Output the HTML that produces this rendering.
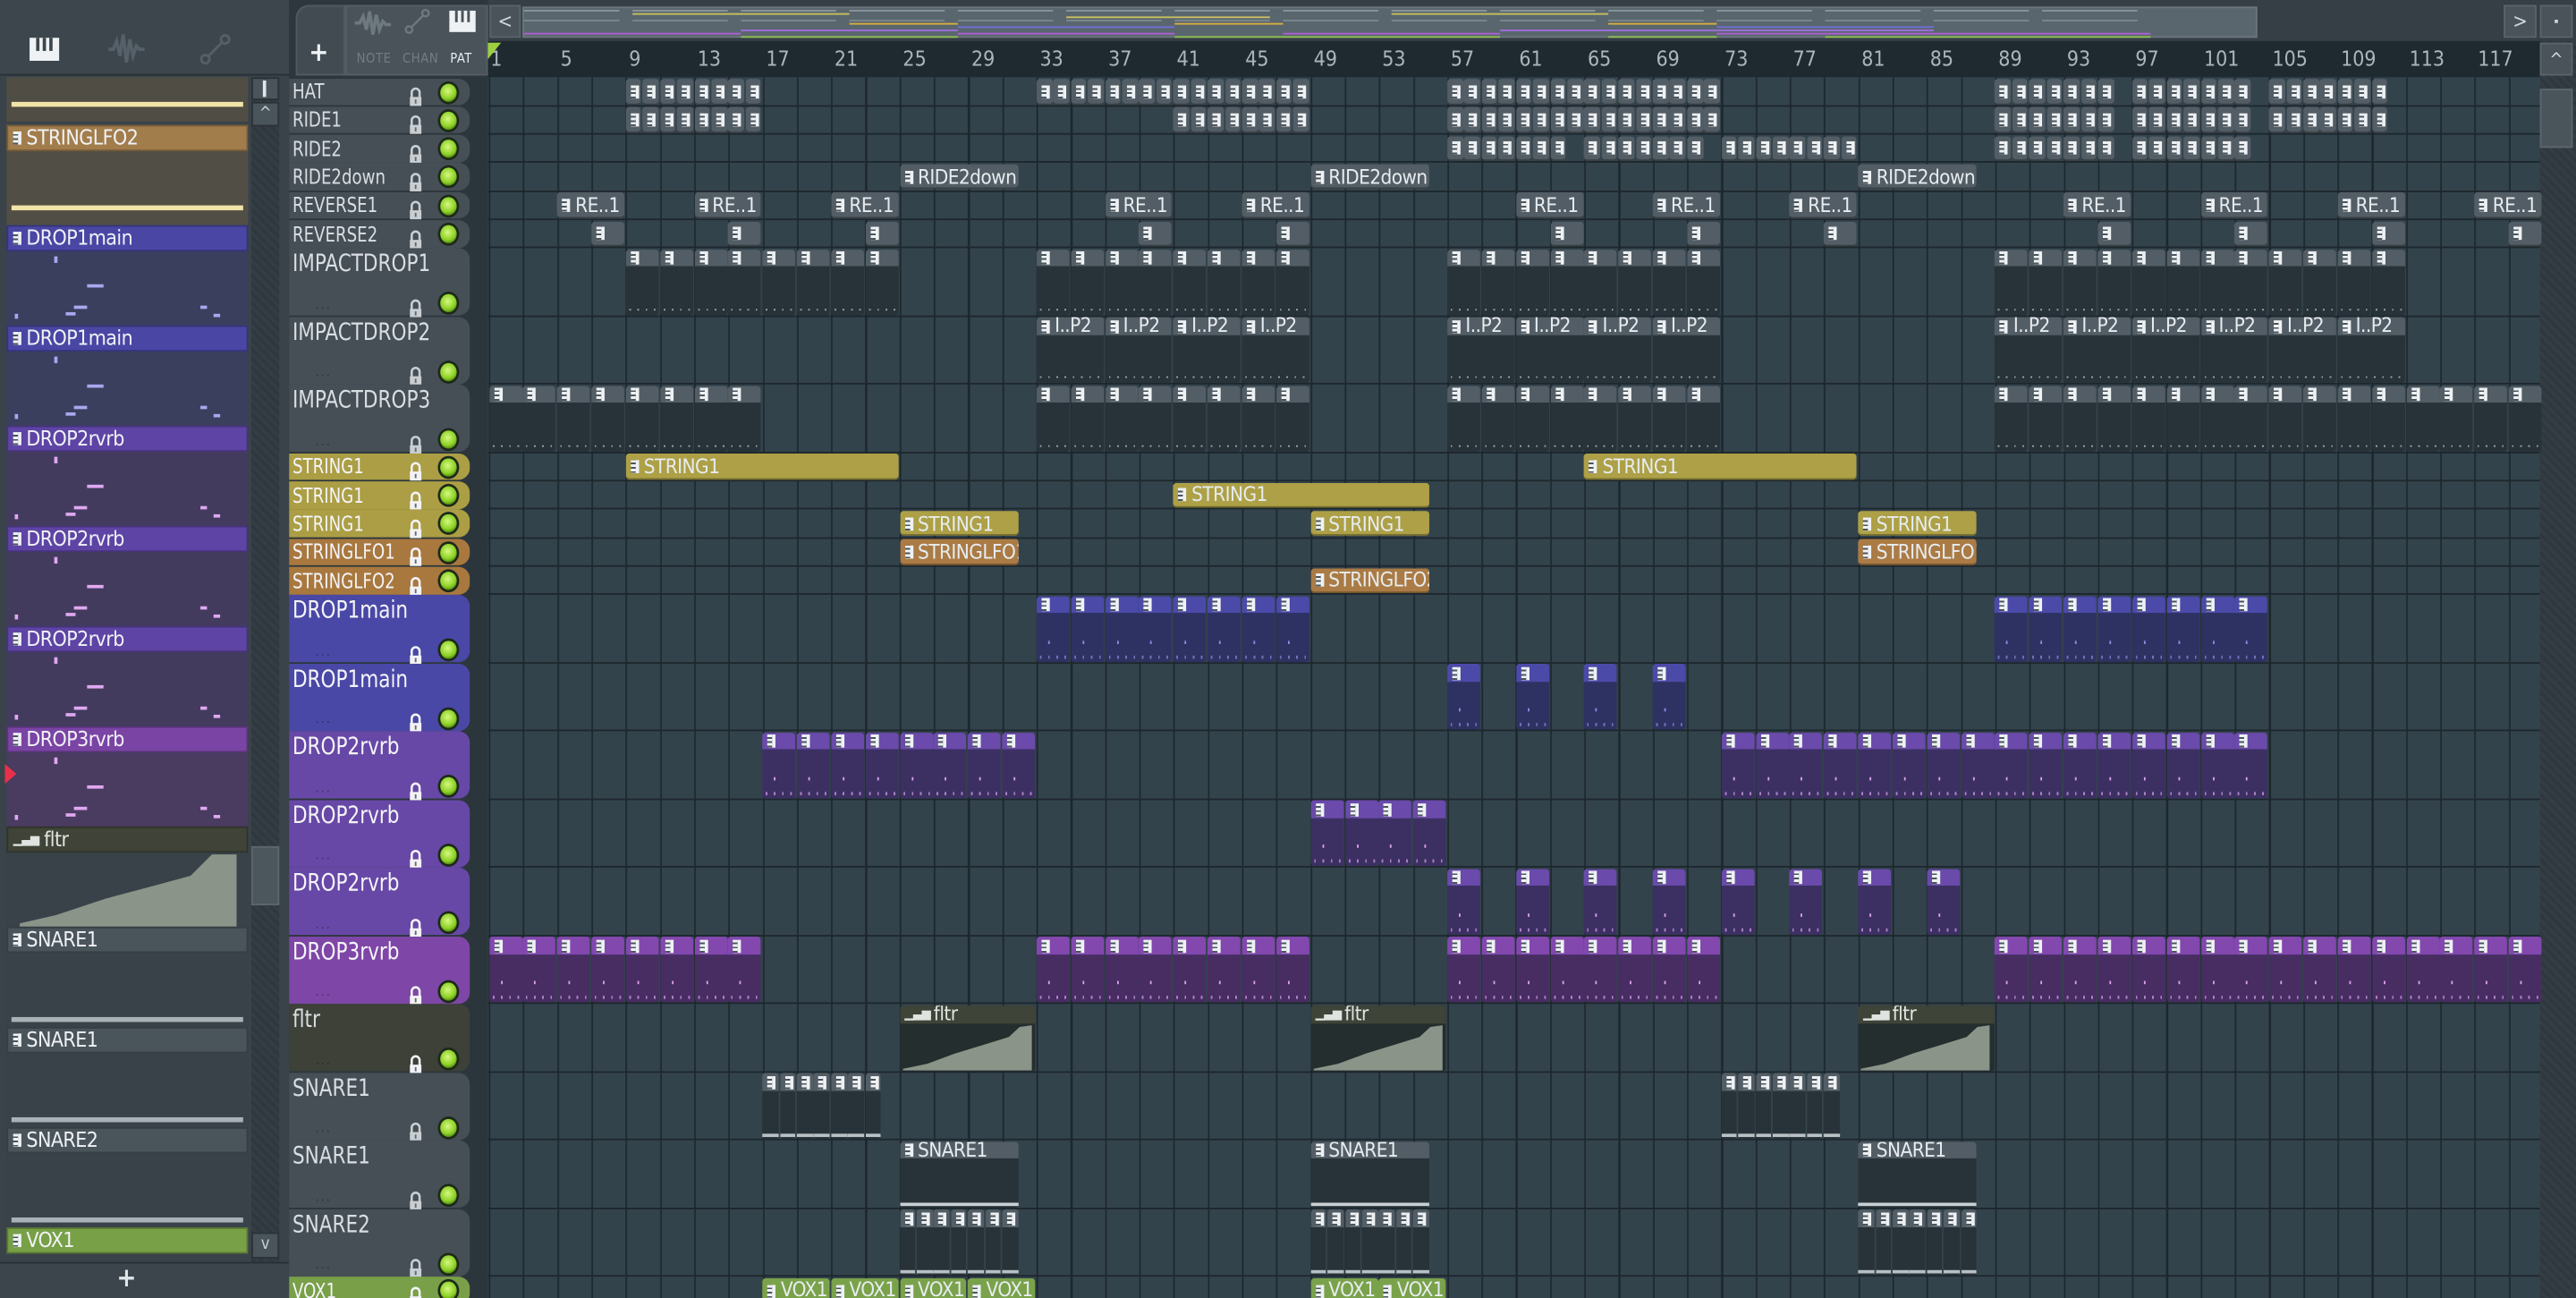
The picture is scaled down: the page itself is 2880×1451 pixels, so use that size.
<!DOCTYPE html>
<html><head><meta charset="utf-8">
<style>
html,body{margin:0;padding:0;width:2880px;height:1450px;overflow:hidden;background:#2c363c}
#w{position:absolute;left:0;top:0;width:1568px;height:790px;transform:scale(1.836735);transform-origin:0 0;font-family:"DejaVu Sans Condensed","DejaVu Sans","Liberation Sans",sans-serif;font-stretch:condensed;overflow:hidden;background:#2c363c}
.a{position:absolute;box-sizing:border-box}
.g{display:inline-block;width:5px;height:8px;background:repeating-linear-gradient(#eef2f4 0 1.6px,#4a545c 1.6px 2.6px);border-right:2px solid #eef2f4;box-sizing:border-box;vertical-align:middle;margin-right:3px;flex:none}
.lbl{font-size:12.2px;letter-spacing:-0.3px;color:#e6ecef;white-space:nowrap;overflow:hidden;display:flex;align-items:center;padding-left:3px;line-height:1}
.led{position:absolute;width:10px;height:11px;border-radius:50%;background:radial-gradient(circle at 45% 40%,#d4f880,#8cd024 55%,#4c8010 80%);box-shadow:0 0 0 1.5px #1c2a18}
.rn{position:absolute;top:28px;font-size:12.5px;color:#a9b6be}
.rl{position:absolute;font-size:12.8px;white-space:nowrap;transform:scaleX(.86);transform-origin:0 0}
.rt{font-size:14.5px;transform:scaleX(.9)}
</style></head><body><div id="w">
<div class="a" style="left:0;top:0;width:176px;height:790px;background:#3a434a"></div>
<div class="a" style="left:0;top:0;width:176px;height:46px;background:#3d464d;border-bottom:1px solid #283036"></div>
<svg class="a" style="left:17px;top:22px" width="20" height="16" viewBox="0 0 20 16"><rect x="1" y="1" width="18" height="14" fill="#eef2f4"/><rect x="5" y="1" width="2" height="8" fill="#3d464d"/><rect x="9" y="1" width="2" height="8" fill="#3d464d"/><rect x="13" y="1" width="2" height="8" fill="#3d464d"/></svg>
<svg class="a" style="left:65px;top:18px" width="24" height="24" viewBox="0 0 24 24"><path d="M1 12h3l2-5 2 9 2-13 2 17 2-14 2 10 2-6 2 2h3" fill="none" stroke="#556068" stroke-width="2"/></svg>
<svg class="a" style="left:121px;top:20px" width="20" height="20" viewBox="0 0 20 20"><circle cx="4" cy="16" r="2.5" fill="none" stroke="#556068" stroke-width="1.5"/><circle cx="16" cy="4" r="2.5" fill="none" stroke="#556068" stroke-width="1.5"/><path d="M6 14L14 6" stroke="#556068" stroke-width="1.5"/></svg>
<div id="plist"></div>
<div class="a" style="left:153px;top:47px;width:17px;height:721px;background:repeating-linear-gradient(45deg,#2f383e 0 2px,#343d43 2px 4px)"></div>
<div class="a" style="left:153px;top:47px;width:17px;height:14px;background:#4a545b;border:1px solid #2a3237"></div>
<div class="a" style="left:160px;top:49px;width:2px;height:10px;background:#e0e6ea"></div>
<div class="a" style="left:153px;top:62px;width:17px;height:15px;background:#4a545b;border:1px solid #2a3237;color:#c8d0d4;font-size:10px;text-align:center;line-height:13px">^</div>
<div class="a" style="left:153px;top:515px;width:17px;height:36px;background:#4c565d;border:1px solid #5c666d"></div>
<div class="a" style="left:153px;top:750px;width:17px;height:16px;background:#4a545b;border:1px solid #2a3237;color:#c8d0d4;font-size:10px;text-align:center;line-height:13px">v</div>
<div class="a" style="left:0;top:768px;width:176px;height:22px;background:#3c454c;border-top:1px solid #283036"></div>
<div class="a" style="left:71px;top:768px;font-size:16px;color:#dfe5e8;font-weight:bold">+</div>
<div class="a" style="left:3px;top:465px;width:0;height:0;border-top:6px solid transparent;border-bottom:6px solid transparent;border-left:7px solid #e8304c"></div>

<div class="a" style="left:176px;top:0;width:121px;height:47px;background:#2d373d"></div>
<div class="a" style="left:180px;top:3px;width:30px;height:43px;background:#424b52;border-radius:8px 0 0 0;border:1px solid #515a61"></div>
<div class="a" style="left:188px;top:22px;font-size:16px;color:#eef2f4;font-weight:bold">+</div>
<div class="a" style="left:210px;top:3px;width:87px;height:43px;background:#4a535a;border:1px solid #565f66"></div>
<svg class="a" style="left:215px;top:4px" width="24" height="20" viewBox="0 0 24 20"><path d="M1 10h3l2-4 2 8 2-11 2 14 2-12 2 9 2-5 2 2h3" fill="none" stroke="#6e787f" stroke-width="2"/></svg>
<svg class="a" style="left:246px;top:5px" width="16" height="16" viewBox="0 0 16 16"><circle cx="3" cy="13" r="2" fill="none" stroke="#6e787f" stroke-width="1.3"/><circle cx="13" cy="3" r="2" fill="none" stroke="#6e787f" stroke-width="1.3"/><path d="M4.5 11.5L11.5 4.5" stroke="#6e787f" stroke-width="1.3"/></svg>
<svg class="a" style="left:273px;top:6px" width="17" height="14" viewBox="0 0 17 14"><rect x="0.5" y="0.5" width="16" height="13" fill="#eef2f4"/><rect x="4" y="0.5" width="1.6" height="7" fill="#4a535a"/><rect x="7.7" y="0.5" width="1.6" height="7" fill="#4a535a"/><rect x="11.4" y="0.5" width="1.6" height="7" fill="#4a535a"/></svg>
<div class="a" style="left:217px;top:31px;font-size:8px;color:#727c83;letter-spacing:.3px">NOTE</div>
<div class="a" style="left:245px;top:31px;font-size:8px;color:#727c83;letter-spacing:.3px">CHAN</div>
<div class="a" style="left:274px;top:31px;font-size:8px;color:#e6ecef;letter-spacing:.3px">PAT</div>

<div class="a" style="left:297px;top:0;width:1271px;height:25px;background:#363f46"></div>
<div class="a" style="left:298px;top:3px;width:19px;height:20px;background:#4a535a;border:1px solid #5a636a;color:#d0d6da;font-size:12px;text-align:center;line-height:18px">&lt;</div>
<div id="ov" class="a" style="left:318px;top:4px;width:1056px;height:19px;background:#5a666e;border:1px solid #6a767d"></div>
<div class="a" style="left:1524px;top:3px;width:20px;height:20px;background:#4a535a;border:1px solid #5a636a;color:#d0d6da;font-size:12px;text-align:center;line-height:18px">&gt;</div>
<div class="a" style="left:1546px;top:3px;width:20px;height:20px;background:#4a535a;border:1px solid #5a636a"></div>
<div class="a" style="left:1555px;top:12px;width:2px;height:2px;background:#d0d6da"></div>

<div class="a" style="left:297px;top:25px;width:1249px;height:22px;background:#1f2a30"></div>
<div id="ruler"></div>
<div class="a" style="left:297px;top:26px;width:0;height:0;border-left:8px solid #9cd040;border-bottom:10px solid transparent"></div>

<div class="a" style="left:1546px;top:25px;width:22px;height:765px;background:repeating-linear-gradient(45deg,#2f383e 0 2px,#343d43 2px 4px)"></div>
<div class="a" style="left:1546px;top:26px;width:20px;height:20px;background:#4a535a;border:1px solid #5a636a;color:#d0d6da;font-size:11px;text-align:center;line-height:20px">^</div>
<div class="a" style="left:1546px;top:54px;width:20px;height:36px;background:#4a545b;border:1px solid #5c666d"></div>

<div class="a" style="left:297px;top:47px;width:1249px;height:743px;background-color:#33434c;background-image:repeating-linear-gradient(90deg,#1d272d 0 1px,transparent 1px 20.84px);background-position:0.5px 0"></div>
<div id="rows"></div>
</div>
<script>
const X0=297.5,BW=10.42,S=17.3,T=41.5,Y0=47.5;
const bx=b=>X0+(b-1)*BW;
const rep=(s,n,l,t)=>{let a=[];for(let i=0;i<n;i++)a.push([s+i*l,l,t]);return a};
const C={g:{h:'#535d65',b:'#283339'},gold:{h:'#ada046'},orange:{h:'#ab7b45'},blue:{h:'#4b4aa8',b:'#2e3262'},purple:{h:'#6a4aaa',b:'#3c3062'},violet:{h:'#8248ae',b:'#472d62'},green:{h:'#7aa24a'},auto:{h:'#3f4439',b:'#252e2e'}};
const H={g:'#474f56',gold:'#ab9e44',orange:'#a8783e',blue:'#4a48a6',purple:'#6748a6',violet:'#7e46a6',auto:'#3d4138',green:'#79a049'};
const R5=[5,13,21,37,45,61,69,77,93,101,109,117];
const rows=[
['HAT','s','g',[...rep(9,8,1),...rep(33,16,1),...rep(57,16,1),...rep(89,7,1),...rep(97,7,1),...rep(105,7,1)]],
['RIDE1','s','g',[...rep(9,8,1),...rep(41,8,1),...rep(57,16,1),...rep(89,7,1),...rep(97,7,1),...rep(105,7,1)]],
['RIDE2','s','g',[...rep(57,7,1),...rep(65,7,1),...rep(73,8,1),...rep(89,7,1),...rep(97,7,1)]],
['RIDE2down','s','g',[[25,7,'RIDE2down'],[49,7,'RIDE2down'],[81,7,'RIDE2down']]],
['REVERSE1','s','g',R5.map(b=>[b,4,'RE..1'])],
['REVERSE2','s','g',R5.map(b=>[b+2,2,''])],
['IMPACTDROP1','t','g',[...rep(9,8,2),...rep(33,8,2),...rep(57,8,2),...rep(89,12,2)]],
['IMPACTDROP2','t','g',[...rep(33,4,4,'I..P2'),...rep(57,4,4,'I..P2'),...rep(89,6,4,'I..P2')]],
['IMPACTDROP3','t','g',[...rep(1,8,2),...rep(33,8,2),...rep(57,8,2),...rep(89,16,2)]],
['STRING1','s','gold',[[9,16,'STRING1'],[65,16,'STRING1']]],
['STRING1','s','gold',[[41,15,'STRING1']]],
['STRING1','s','gold',[[25,7,'STRING1'],[49,7,'STRING1'],[81,7,'STRING1']]],
['STRINGLFO1','s','orange',[[25,7,'STRINGLFO1'],[81,7,'STRINGLFO1']]],
['STRINGLFO2','s','orange',[[49,7,'STRINGLFO2']]],
['DROP1main','t','blue',[...rep(33,8,2),...rep(89,8,2)]],
['DROP1main','t','blue',[[57,2],[61,2],[65,2],[69,2]]],
['DROP2rvrb','t','purple',[...rep(17,8,2),...rep(73,16,2)]],
['DROP2rvrb','t','purple',rep(49,4,2)],
['DROP2rvrb','t','purple',rep(57,8,4).map(c=>[c[0],2])],
['DROP3rvrb','t','violet',[...rep(1,8,2),...rep(33,8,2),...rep(57,8,2),...rep(89,16,2)]],
['fltr','t','auto',[[25,8,'fltr'],[49,8,'fltr'],[81,8,'fltr']]],
['SNARE1','t','g',[...rep(17,7,1),...rep(73,7,1)],'tiles'],
['SNARE1','t','g',[[25,7,'SNARE1'],[49,7,'SNARE1'],[81,7,'SNARE1']],'line'],
['SNARE2','t','g',[...rep(25,7,1),...rep(49,7,1),...rep(81,7,1)],'tiles'],
['VOX1','s','green',[[17,4,'VOX1'],[21,4,'VOX1'],[25,4,'VOX1'],[29,4,'VOX1'],[49,4,'VOX1'],[53,4,'VOX1']]]
];
const lock=c=>`<svg width="8" height="12" viewBox="0 0 8 12"><path d="M1.6 6.5V3.3a2.4 2.4 0 0 1 4.8 0v3.2" fill="none" stroke="${c}" stroke-width="1.4"/><rect x="0.5" y="6" width="7" height="5.5" fill="${c}"/><rect x="3.5" y="7.5" width="1" height="2.5" fill="#666"/></svg>`;
let h='',y=Y0;
rows.forEach(r=>{
 const [n,t,col,cl,mode]=r;const hh=t=='s'?S:T;const hc=H[col];const lc=col=='g'?'#c8ced2':'#f2f2f6';
 const tc=col=='g'||col=='auto'?'#d8dee2':'#f4f4f8';
 h+=`<div class="a" style="left:176px;top:${y}px;width:110px;height:${hh-0.6}px;background:${hc};border-radius:0 7px 7px 0"></div>`;
 h+=`<div class="rl${t=='t'?' rt':''}" style="left:178px;top:${y+(t=='s'?1.5:2)}px;color:${tc}">${n}</div>`;
 const ly=t=='s'?y+2.5:y+hh-14;
 h+=`<div class="a" style="left:249px;top:${ly}px">${lock(lc)}</div>`;
 h+=`<div class="led" style="left:268px;top:${ly+0.5}px"></div>`;
 if(t=='t')h+=`<div class="a" style="left:192px;top:${y+hh-12}px;font-size:8px;color:rgba(0,0,0,.35);letter-spacing:1px">...</div>`;
 h+=`<div class="a" style="left:286px;top:${y}px;width:11px;height:${hh}px;background:#2b363c"></div>`;
 h+=`<div class="a" style="left:297px;top:${y+hh-1}px;width:1249px;height:1px;background:#1d272d"></div>`;
 const cc=C[col];
 cl.forEach(c=>{
  const x=bx(c[0]),w=c[1]*BW-0.8,lab=c[2]||'';
  if(t=='s'){
   h+=`<div class="a lbl" style="left:${x}px;top:${y+0.5}px;width:${w}px;height:${hh-1.8}px;background:${cc.h};border-radius:2px;box-shadow:inset 0 -1px 0 rgba(0,0,0,.3)"><i class="g"></i>${lab}</div>`;
  }else if(col=='auto'){
   h+=`<div class="a" style="left:${x}px;top:${y+0.5}px;width:${w}px;height:${hh-1.5}px;background:${cc.b};border-radius:2px"></div>`;
   h+=`<div class="a lbl" style="left:${x}px;top:${y+0.5}px;width:${w}px;height:11px;background:${cc.h};border-radius:2px 2px 0 0;color:#dfe4e0"><span style="font-size:8px;margin-right:2px">▁▃▅</span>${lab}</div>`;
   h+=`<svg class="a" style="left:${x}px;top:${y+12}px" width="${w}" height="${hh-13}" viewBox="0 0 100 28" preserveAspectRatio="none"><path d="M2 28V27L20 24L40 18L60 13L80 8L88 2L97 1V28Z" fill="#8a9488"/></svg>`;
  }else{
   const hd=9.5;
   h+=`<div class="a" style="left:${x}px;top:${y+0.5}px;width:${w}px;height:${hh-1.5}px;background:${cc.b};border-radius:2px"></div>`;
   h+=`<div class="a lbl" style="left:${x}px;top:${y+0.5}px;width:${w}px;height:${hd+1}px;background:${cc.h};border-radius:2px 2px 0 0"><i class="g"></i>${lab}</div>`;
   if(col!='g'){
    const dc=col=='blue'?'#8c8ce0':'#d8a0f0';
    h+=`<div class="a" style="left:${x+w/2-3}px;top:${y+hh-14}px;width:1px;height:2px;background:${dc}"></div><div class="a" style="left:${x+2}px;top:${y+hh-5}px;width:${w-4}px;height:2px;background:repeating-linear-gradient(90deg,${dc} 0 1px,transparent 1px 5px);opacity:.7"></div>`;
   }else if(mode=='line'){
    h+=`<div class="a" style="left:${x}px;top:${y+hh-3.5}px;width:${w}px;height:1.5px;background:#c8d0d4"></div>`;
   }else if(mode=='tiles'){
    h+=`<div class="a" style="left:${x}px;top:${y+hh-4}px;width:${w}px;height:1.5px;background:#b8c0c4"></div>`;
   }else{
    h+=`<div class="a" style="left:${x+2}px;top:${y+hh-5}px;width:${w-4}px;height:1px;background:repeating-linear-gradient(90deg,#9aa4aa 0 1px,transparent 1px 5px)"></div>`;
   }
  }
 });
 y+=hh;
});
document.getElementById('rows').innerHTML=h;
let r='';for(let b=1;b<=117;b+=4)r+=`<div class="rn" style="left:${bx(b)+(b==1?1:2)}px">${b}</div>`;
document.getElementById('ruler').innerHTML=r;
let o='';const ox=b=>(b-1)*8.25;
const ol=(b,l,yy,c)=>o+=`<div class="a" style="left:${ox(b)}px;top:${yy}px;width:${l*8.25}px;height:1.2px;background:${c}"></div>`;
[[9,16],[65,16]].forEach(a=>ol(a[0],a[1],3,'#c8c060'));[[41,15]].forEach(a=>ol(a[0],a[1],5,'#c8c060'));
[[25,8],[49,8],[81,8]].forEach(a=>ol(a[0],a[1],9,'#d8b040'));
[[33,16],[89,16]].forEach(a=>ol(a[0],a[1],11,'#7070d8'));[[17,16],[73,32]].forEach(a=>ol(a[0],a[1],13,'#a070e0'));
[[1,16],[33,16],[57,16],[89,32]].forEach(a=>ol(a[0],a[1],14.5,'#b060d8'));
[[17,16],[49,8],[81,8],[57,16],[97,24]].forEach(a=>ol(a[0],a[1],16.5,'#90c050'));
for(let b=1;b<121;b+=8){ol(b,7,1,'#8a969c');ol(b,7,7,'#7c888e')}
document.getElementById('ov').innerHTML=o;
const P=[['','#504e44','#504e44','cream',47,-14],['STRINGLFO2','#a27d4c','#514f45','cream'],['DROP1main','#4946a4','#3b3f5e','n1'],['DROP1main','#4946a4','#3b3f5e','n1'],['DROP2rvrb','#5e44a4','#423b5e','n2'],['DROP2rvrb','#5e44a4','#423b5e','n2'],['DROP2rvrb','#5e44a4','#423b5e','n2'],['DROP3rvrb','#7a44a4','#4a3b60','n3'],['fltr','#404438','#394249','ramp'],['SNARE1','#4a545b','#394249','line'],['SNARE1','#4a545b','#394249','line'],['SNARE2','#4a545b','#394249','line'],['VOX1','#78a046','#394249','']];
let p='';
P.forEach((it,i)=>{
 const top=i==0?47:76+(i-1)*61;
 if(i>0)p+=`<div class="a lbl" style="left:4px;top:${top}px;width:147px;height:16px;background:${it[1]};border:1px solid rgba(0,0,0,.25);font-size:12.5px;color:${it[0]=='fltr'?'#dfe4e0':'#f0f2f6'}">${it[0]=='fltr'?'<span style="font-size:8px;margin-right:3px">▁▃▅</span>':'<i class="g"></i>'}${it[0]}</div>`;
 if(i==12)return;
 const bt=i==0?47:top+16,bh=i==0?27:45;
 p+=`<div class="a" style="left:4px;top:${bt}px;width:147px;height:${bh}px;background:${it[2]}"></div>`;
 if(it[3]=='cream')p+=`<div class="a" style="left:7px;top:${bt+bh-12}px;width:141px;height:3px;background:#f0e4a8"></div>`;
 if(it[3]=='line')p+=`<div class="a" style="left:7px;top:${bt+bh-6}px;width:141px;height:3px;background:#a8b2b6"></div>`;
 if(it[3][0]=='n'){const c=it[3]=='n1'?'#a8a8f0':'#e0a8f0';
  [[29,3,1,4],[49,20,5,2],[41,33,4,2],[36,37,3,2],[118,33,2,2],[126,38,2,2],[5,38,1,3]].forEach(d=>p+=`<div class="a" style="left:${4+d[0]}px;top:${bt+d[1]}px;width:${d[2]*2}px;height:${d[3]}px;background:${c}"></div>`);}
 if(it[3]=='ramp')p+=`<svg class="a" style="left:4px;top:${bt}px" width="147" height="45" viewBox="0 0 147 45" preserveAspectRatio="none"><path d="M8 45V43L30 38L60 28L90 20L112 14L125 1H140V45Z" fill="#8a9488"/></svg>`;
});
document.getElementById('plist').innerHTML=p;
</script>
</body></html>
